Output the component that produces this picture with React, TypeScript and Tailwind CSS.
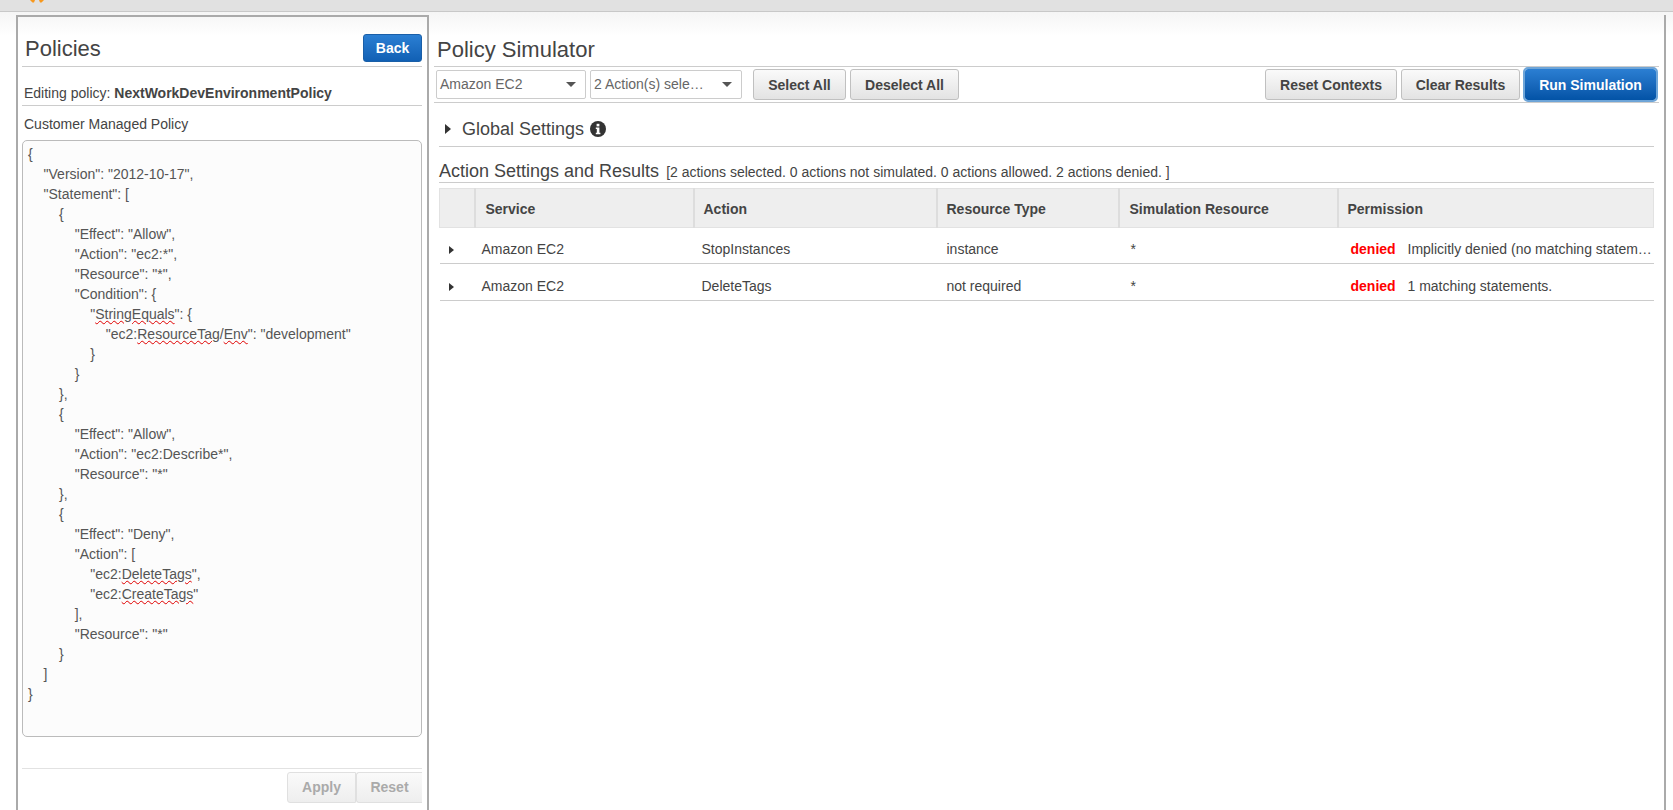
import { Fragment, type ReactNode } from 'react';

const SANS = 'font-["Liberation_Sans",Arial,sans-serif]';

function Squiggle({ children }: { children: ReactNode }) {
  return <span className="underline decoration-wavy decoration-[#e00000] decoration-1 underline-offset-1">{children}</span>;
}

function GreyButton({ label, className }: { label: string; className: string }) {
  return (
    <button className={`h-[31px] rounded-[3px] border border-[#c0c0c0] bg-gradient-to-b from-[#fafafa] to-[#e3e3e3] pt-[1px] text-[14px] font-bold text-[#444] ${className}`}>
      {label}
    </button>
  );
}

function FakeSelect({ label, className }: { label: string; className: string }) {
  return (
    <div className={`flex h-[29px] items-center justify-between rounded-[2px] border border-[#ccc] bg-white pl-[3px] pr-[9px] text-[14px] text-[#666] ${className}`}>
      <span>{label}</span>
      <span className="h-0 w-0 border-x-[5px] border-t-[5px] border-x-transparent border-t-[#555]" />
    </div>
  );
}

const policy: ReactNode[] = [
  '{',
  '    "Version": "2012-10-17",',
  '    "Statement": [',
  '        {',
  '            "Effect": "Allow",',
  '            "Action": "ec2:*",',
  '            "Resource": "*",',
  '            "Condition": {',
  <>{'                "'}<Squiggle>StringEquals</Squiggle>{'": {'}</>,
  <>{'                    "ec2:'}<Squiggle>ResourceTag</Squiggle>/<Squiggle>Env</Squiggle>{'": "development"'}</>,
  '                }',
  '            }',
  '        },',
  '        {',
  '            "Effect": "Allow",',
  '            "Action": "ec2:Describe*",',
  '            "Resource": "*"',
  '        },',
  '        {',
  '            "Effect": "Deny",',
  '            "Action": [',
  <>{'                "ec2:'}<Squiggle>DeleteTags</Squiggle>{'",'}</>,
  <>{'                "ec2:'}<Squiggle>CreateTags</Squiggle>{'"'}</>,
  '            ],',
  '            "Resource": "*"',
  '        }',
  '    ]',
  '}',
];

const headers = [
  { label: 'Service', cls: 'w-[219px] pl-[10px]' },
  { label: 'Action', cls: 'w-[243px] pl-[9px]' },
  { label: 'Resource Type', cls: 'w-[182px] pl-[9px]' },
  { label: 'Simulation Resource', cls: 'w-[219px] pl-[10px]' },
  { label: 'Permission', cls: 'pl-[9px]' },
];

const results = [
  { action: 'StopInstances', type: 'instance', note: 'Implicitly denied (no matching statem…' },
  { action: 'DeleteTags', type: 'not required', note: '1 matching statements.' },
];

export default function App() {
  return (
    <div className={`flex h-[810px] w-full flex-col overflow-hidden bg-white ${SANS}`}>
      {/* Top nav, cut off by the screenshot */}
      <div className="h-[12px] shrink-0 border-b border-[#c8c8c8] bg-[#e1e1e1] pl-[30px]">
        <svg width="14" height="3" viewBox="0 0 14 3" className="block">
          <path d="M0 0h5L4 2.5H2.5zM14 0H9l1 2.5h1.5z" fill="#f7981d" />
        </svg>
      </div>

      <div className="flex min-h-0 flex-1 bg-[linear-gradient(#f5f5f5,#ffffff_24px)] pl-[16px] pt-[3px]">
        {/* Policies column */}
        <div className="flex w-[413px] shrink-0 flex-col border-x-2 border-t-2 border-[#aaa] pl-[4px] pr-[5px]">
          <div className="flex h-[50px] shrink-0 items-end justify-between border-b border-[#ccc] pb-[4px]">
            <h1 className="pl-[3px] text-[22px] leading-[26px] text-[#444]">Policies</h1>
            <button className="h-[28px] w-[59px] rounded-[3px] border border-[#1a5fa8] bg-gradient-to-b from-[#2b7fd3] to-[#1160b4] text-[14px] font-bold text-white">
              Back
            </button>
          </div>
          <div className="flex h-[39px] shrink-0 items-end border-b border-[#ccc] pl-[2px] text-[14px] leading-[24px] text-[#444]">
            <span>Editing policy: <b>NextWorkDevEnvironmentPolicy</b></span>
          </div>
          <div className="h-[34px] shrink-0 pl-[2px] pt-[7px] text-[14px] leading-[22px] text-[#444]">Customer Managed Policy</div>
          <div className="h-[597px] shrink-0 overflow-hidden rounded-[5px] border border-[#bbb] bg-[#fcfcfc] pl-[5px] pt-[3px] text-[14px] leading-[20px] text-[#555]">
            {policy.map((line, i) => (
              <Fragment key={i}>
                <div className="whitespace-pre">{line}</div>
              </Fragment>
            ))}
          </div>
          <div className="mt-[31px] flex justify-end border-t border-[#e2e2e2] pt-[3px]">
            <button className="h-[31px] w-[69px] rounded-l-[3px] border border-[#e0e0e0] bg-gradient-to-b from-[#fafafa] to-[#eee] text-[14px] font-bold text-[#aaa]">Apply</button>
            <button className="h-[31px] w-[66px] rounded-l-[3px] border border-r-0 border-[#e0e0e0] bg-gradient-to-b from-[#fafafa] to-[#eee] text-[14px] font-bold text-[#aaa]">Reset</button>
          </div>
        </div>

        {/* Simulator column */}
        <div className="flex w-[1237px] shrink-0 flex-col border-r-2 border-[#aaa] pl-[5px] pr-[5px]">
          <h1 className="flex h-[52px] shrink-0 items-end border-b border-[#ccc] pb-[1px] pl-[3px] text-[22px] leading-[30px] text-[#444]">Policy Simulator</h1>
          <div className="flex h-[36px] shrink-0 items-center border-b border-[#ccc] pl-[2px]">
            <FakeSelect label="Amazon EC2" className="w-[150px]" />
            <FakeSelect label="2 Action(s) sele…" className="ml-[4px] w-[152px]" />
            <GreyButton label="Select All" className="ml-[11px] w-[93px]" />
            <GreyButton label="Deselect All" className="ml-[4px] w-[109px]" />
            <div className="flex-1" />
            <GreyButton label="Reset Contexts" className="w-[132px]" />
            <GreyButton label="Clear Results" className="ml-[4px] w-[119px]" />
            <button className="ml-[5px] mr-[3px] h-[31px] w-[131px] rounded-[3px] bg-gradient-to-b from-[#2b7fd3] to-[#0353a6] pt-[1px] text-[14px] font-bold text-white outline-2 outline-[#6ea5d8]">
              Run Simulation
            </button>
          </div>

          <div className="ml-[5px] mr-[5px] flex h-[44px] shrink-0 items-center border-b border-[#ccc] pl-[6px] pt-[9px] text-[18px] text-[#444]">
            <span className="mr-[11px] inline-block h-0 w-0 border-y-[5px] border-l-[6px] border-y-transparent border-l-[#333]" />
            Global Settings
            <svg width="16" height="16" viewBox="0 0 16 16" className="ml-[6px]">
              <circle cx="8" cy="8" r="8" fill="#333" />
              <rect x="6.6" y="2.8" width="2.8" height="2.6" fill="#fff" />
              <path d="M5.8 6.6h3.6v5.2h1v1.4H5.8v-1.4h1V8H5.8z" fill="#fff" />
            </svg>
          </div>

          <div className="ml-[5px] mr-[5px] flex h-[36px] shrink-0 items-end border-b border-[#ccc] text-[18px] leading-[22px] text-[#444]">
            Action Settings and Results
            <span className="ml-[7px] text-[14px] leading-[20px]">[2 actions selected. 0 actions not simulated. 0 actions allowed. 2 actions denied. ]</span>
          </div>

          <table className="ml-[5px] mt-[5px] w-[1215px] table-fixed border-collapse text-[14px]">
            <thead>
              <tr className="h-[39px] bg-[#eee] text-left font-bold text-[#444]">
                <th className="w-[35px] border-y border-l border-[#e2e2e2]" />
                {headers.map((h) => (
                  <th key={h.label} className={`border-y border-l-2 border-r border-[#e2e2e2] border-l-[#ddd] pt-[3px] ${h.cls}`}>{h.label}</th>
                ))}
              </tr>
            </thead>
            <tbody className="text-[#444]">
              {results.map((r, i) => (
                <tr key={r.action} className={`${i === 0 ? 'h-[36px]' : 'h-[37px]'} border-b border-[#ccc]`}>
                  <td className={`pl-[9px] ${i === 0 ? 'pt-[7px]' : 'pt-[9px]'}`}><span className="inline-block h-0 w-0 border-y-[4px] border-l-[5px] border-y-transparent border-l-[#333] align-middle" /></td>
                  <td className={`pl-[7px] ${i === 0 ? 'pt-[7px]' : 'pt-[9px]'}`}>Amazon EC2</td>
                  <td className={`pl-[8px] ${i === 0 ? 'pt-[7px]' : 'pt-[9px]'}`}>{r.action}</td>
                  <td className={`pl-[10px] ${i === 0 ? 'pt-[7px]' : 'pt-[9px]'}`}>{r.type}</td>
                  <td className={`pl-[12px] ${i === 0 ? 'pt-[7px]' : 'pt-[9px]'}`}>*</td>
                  <td className={`whitespace-nowrap pl-[13px] ${i === 0 ? 'pt-[7px]' : 'pt-[9px]'}`}>
                    <span className="inline-block w-[57px] font-bold text-[#f00]">denied</span>
                    {r.note}
                  </td>
                </tr>
              ))}
            </tbody>
          </table>
        </div>
      </div>
    </div>
  );
}
